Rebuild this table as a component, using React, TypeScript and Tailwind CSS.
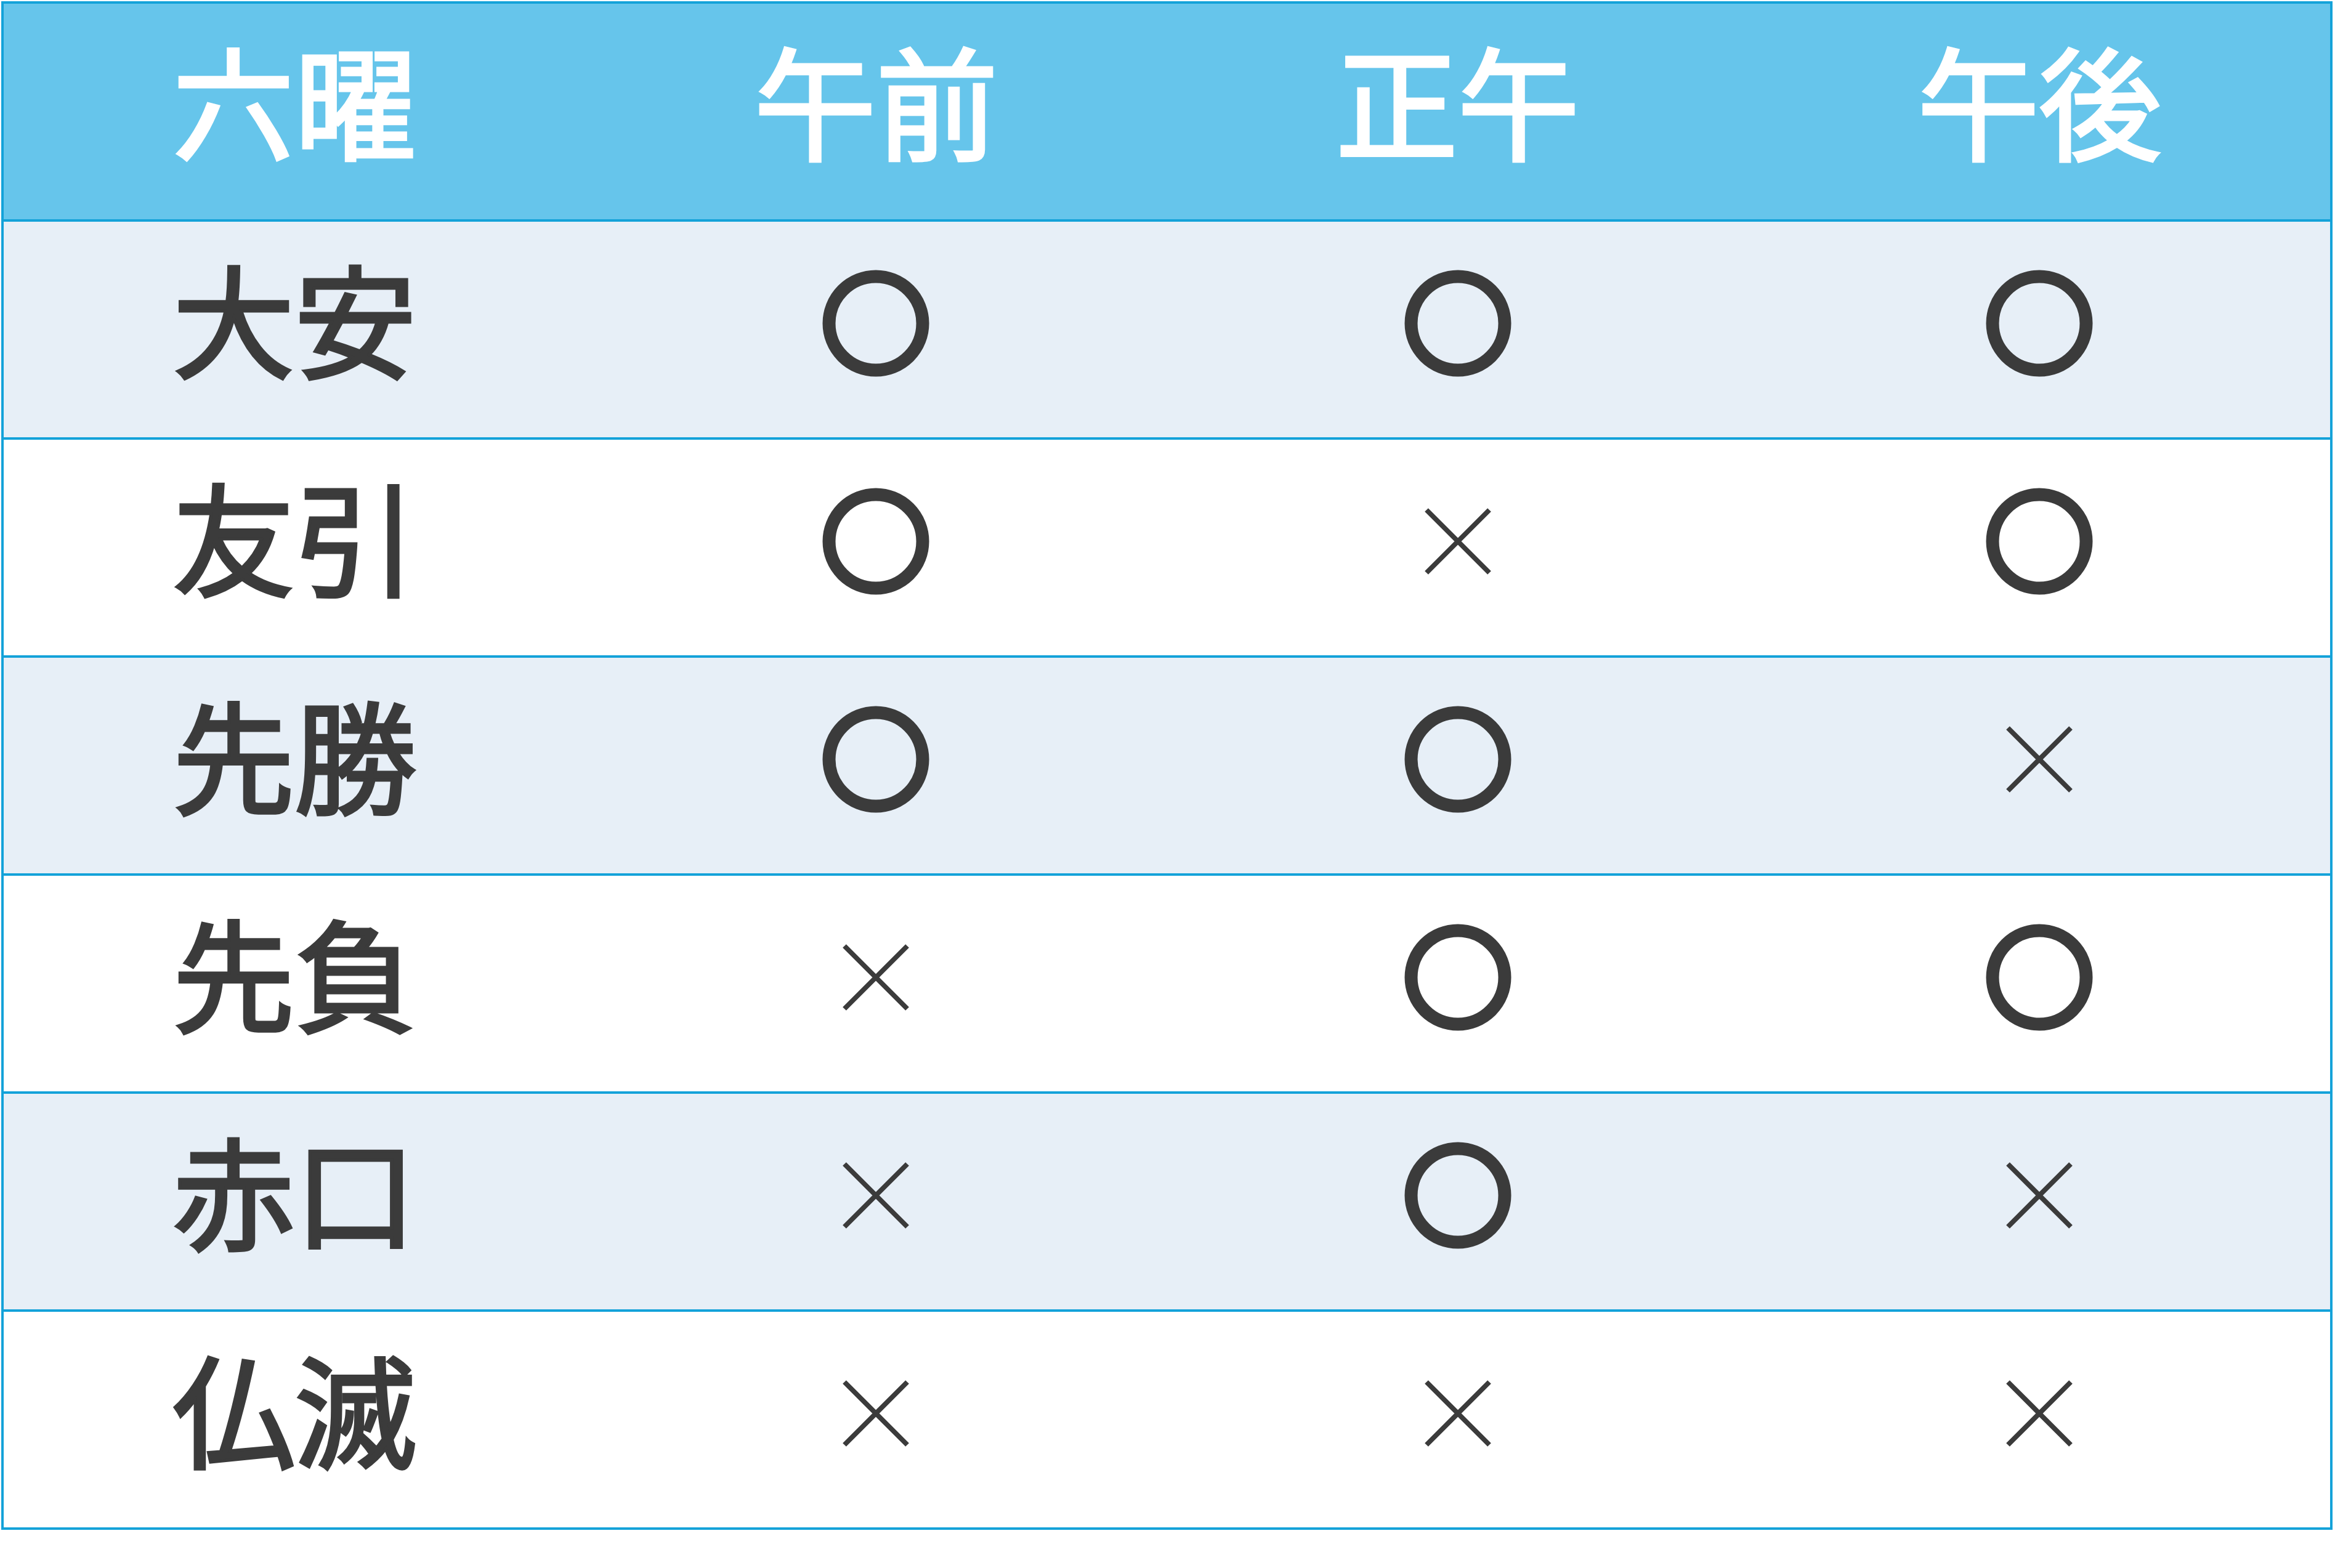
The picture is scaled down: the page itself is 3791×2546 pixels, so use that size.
import React from "react";

const rows: { name: string; v: [boolean, boolean, boolean] }[] = [
  { name: "大安", v: [true, true, true] },
  { name: "友引", v: [true, false, true] },
  { name: "先勝", v: [true, true, false] },
  { name: "先負", v: [false, true, true] },
  { name: "赤口", v: [false, true, false] },
  { name: "仏滅", v: [false, false, false] },
];

const font = { fontFamily: '"Noto Sans CJK JP", "Noto Sans", sans-serif' };

function Circle() {
  return (
    <svg width="176" height="176" viewBox="0 0 176 176" className="mb-[20px]" aria-label="○">
      <circle cx="88" cy="88" r="76" fill="none" stroke="#3b3b3b" strokeWidth="21" />
    </svg>
  );
}

function Cross() {
  return (
    <svg width="108" height="108" viewBox="0 0 108 108" className="mb-[20px]" aria-label="×">
      <path d="M3 3 L105 105 M105 3 L3 105" fill="none" stroke="#3b3b3b" strokeWidth="8" />
    </svg>
  );
}

export default function App() {
  return (
    <div className="w-[3791px] h-[2546px] bg-white pt-[2px] pl-[2px]" style={font}>
      <div className="w-[3785px] border-4 border-[#14a2d9] text-[198px] font-normal text-[#3b3b3b]">
        <div className="grid grid-cols-4 h-[354px] border-b-4 border-[#14a2d9] bg-[#66c5eb] text-white [-webkit-text-stroke:5px_#ffffff]">
          {["六曜", "午前", "正午", "午後"].map((h) => (
            <div key={h} className="flex items-center justify-center leading-none pb-[44px]">
              {h}
            </div>
          ))}
        </div>
        {rows.map((r, i) => (
          <div
            key={r.name}
            className={`grid grid-cols-4 ${i < rows.length - 1 ? "h-[354px] border-b-4" : "h-[350px]"} border-[#14a2d9] ${
              i % 2 === 0 ? "bg-[#e7eff7]" : "bg-white"
            }`}
          >
            <div className="flex items-center justify-center leading-none pb-[44px] [-webkit-text-stroke:5px_#3b3b3b]">
              {r.name}
            </div>
            {r.v.map((ok, j) => (
              <div key={j} className="flex items-center justify-center">
                {ok ? <Circle /> : <Cross />}
              </div>
            ))}
          </div>
        ))}
      </div>
    </div>
  );
}
